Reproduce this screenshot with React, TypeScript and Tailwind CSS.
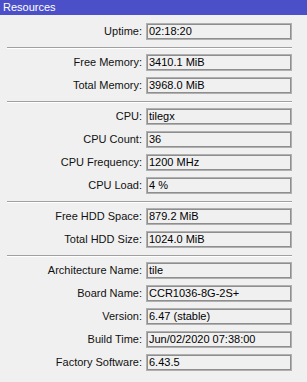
import React from "react";

type Row = { label: string; value: string };

const groups: Row[][] = [
  [{ label: "Uptime:", value: "02:18:20" }],
  [
    { label: "Free Memory:", value: "3410.1 MiB" },
    { label: "Total Memory:", value: "3968.0 MiB" },
  ],
  [
    { label: "CPU:", value: "tilegx" },
    { label: "CPU Count:", value: "36" },
    { label: "CPU Frequency:", value: "1200 MHz" },
    { label: "CPU Load:", value: "4 %" },
  ],
  [
    { label: "Free HDD Space:", value: "879.2 MiB" },
    { label: "Total HDD Size:", value: "1024.0 MiB" },
  ],
  [
    { label: "Architecture Name:", value: "tile" },
    { label: "Board Name:", value: "CCR1036-8G-2S+" },
    { label: "Version:", value: "6.47 (stable)" },
    { label: "Build Time:", value: "Jun/02/2020 07:38:00" },
    { label: "Factory Software:", value: "6.43.5" },
  ],
];

const Field: React.FC<Row> = ({ label, value }) => (
  <div className="flex items-center h-[17px]">
    <div className="w-[143px] pr-[1px] text-right leading-none">{label}</div>
    <div className="ml-[3px] w-[146px] h-[17px] flex items-center px-[2px] border border-[#b0b0b0] shadow-[inset_0_0_0_1px_#8e8e8e] bg-[#f0f0f0] text-black leading-none">
      {value}
    </div>
  </div>
);

export default function App() {
  return (
    <div
      className="w-[307px] h-[382px] bg-[#f0f0f0] text-[11px] text-[#111]"
      style={{ fontFamily: '"Liberation Sans", Arial, sans-serif' }}
    >
      <div className="h-[15px] bg-[#4b50c8] text-white px-[3px] flex items-center leading-none">
        Resources
      </div>
      <div className="pt-[8px]">
        {groups.map((g, gi) => (
          <div key={gi}>
            {gi > 0 && (
              <div className="mt-[7px] mb-[5px] ml-[7px] w-[285px] h-[2px] border-t border-[#a0a0a0] border-b border-b-white" />
            )}
            <div className="flex flex-col gap-[6px]">
              {g.map((r) => (
                <Field key={r.label} {...r} />
              ))}
            </div>
          </div>
        ))}
      </div>
    </div>
  );
}
